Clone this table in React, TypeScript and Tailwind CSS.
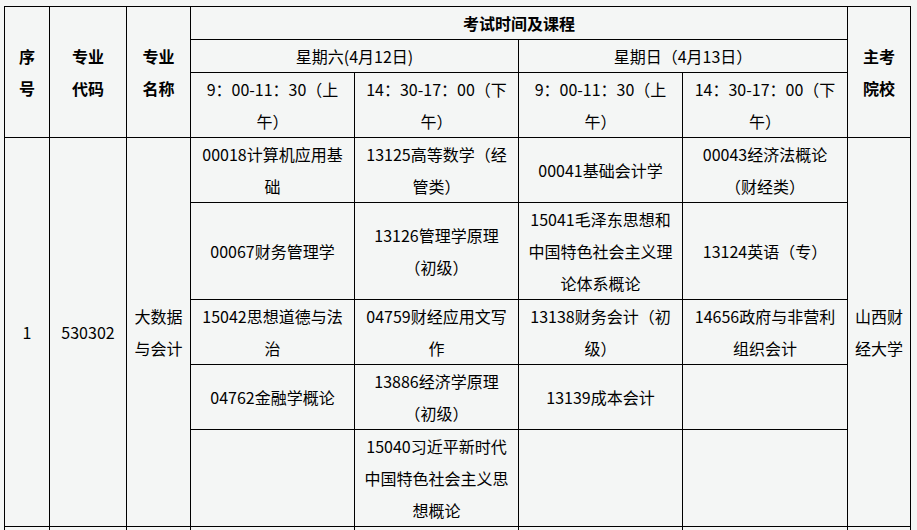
import React from 'react';

type Cell = string[];

const rows: { sat1: Cell; sat2: Cell; sun1: Cell; sun2: Cell }[] = [
  {
    sat1: ['00018计算机应用基', '础'],
    sat2: ['13125高等数学（经', '管类）'],
    sun1: ['00041基础会计学'],
    sun2: ['00043经济法概论', '（财经类）'],
  },
  {
    sat1: ['00067财务管理学'],
    sat2: ['13126管理学原理', '（初级）'],
    sun1: ['15041毛泽东思想和', '中国特色社会主义理', '论体系概论'],
    sun2: ['13124英语（专）'],
  },
  {
    sat1: ['15042思想道德与法', '治'],
    sat2: ['04759财经应用文写', '作'],
    sun1: ['13138财务会计（初', '级）'],
    sun2: ['14656政府与非营利', '组织会计'],
  },
  {
    sat1: ['04762金融学概论'],
    sat2: ['13886经济学原理', '（初级）'],
    sun1: ['13139成本会计'],
    sun2: [],
  },
  {
    sat1: [],
    sat2: ['15040习近平新时代', '中国特色社会主义思', '想概论'],
    sun1: [],
    sun2: [],
  },
];

const td = 'border border-black p-0 text-center align-middle whitespace-nowrap';

function Lines({ lines }: { lines: Cell }) {
  return (
    <>
      {lines.map((l, i) => (
        <div key={i}>{l}</div>
      ))}
    </>
  );
}

export default function App() {
  return (
    <div
      className="min-h-screen bg-[#f4f6f5] pt-[6px] pl-[4px] text-[16px] leading-[32px] text-black"
      style={{ fontFamily: '"Noto Sans CJK SC", "Noto Sans", sans-serif' }}
    >
      <table className="table-fixed border-collapse w-[907px]">
        <colgroup>
          <col className="w-[45px]" />
          <col className="w-[77px]" />
          <col className="w-[64px]" />
          <col className="w-[164px]" />
          <col className="w-[164px]" />
          <col className="w-[164px]" />
          <col className="w-[165px]" />
          <col className="w-[63px]" />
        </colgroup>
        <tbody>
          <tr>
            <td rowSpan={3} className={`${td} font-bold`}>
              <Lines lines={['序', '号']} />
            </td>
            <td rowSpan={3} className={`${td} font-bold`}>
              <Lines lines={['专业', '代码']} />
            </td>
            <td rowSpan={3} className={`${td} font-bold`}>
              <Lines lines={['专业', '名称']} />
            </td>
            <td colSpan={4} className={`${td} font-bold`}>
              考试时间及课程
            </td>
            <td rowSpan={3} className={`${td} font-bold`}>
              <Lines lines={['主考', '院校']} />
            </td>
          </tr>
          <tr>
            <td colSpan={2} className={td}>
              星期六(4月12日)
            </td>
            <td colSpan={2} className={td}>
              星期日（4月13日）
            </td>
          </tr>
          <tr>
            <td className={td}>
              <Lines lines={['9：00-11：30（上', '午）']} />
            </td>
            <td className={td}>
              <Lines lines={['14：30-17：00（下', '午）']} />
            </td>
            <td className={td}>
              <Lines lines={['9：00-11：30（上', '午）']} />
            </td>
            <td className={td}>
              <Lines lines={['14：30-17：00（下', '午）']} />
            </td>
          </tr>
          {rows.map((r, i) => (
            <tr key={i}>
              {i === 0 && (
                <>
                  <td rowSpan={5} className={td}>1</td>
                  <td rowSpan={5} className={td}>530302</td>
                  <td rowSpan={5} className={td}>
                    <Lines lines={['大数据', '与会计']} />
                  </td>
                </>
              )}
              <td className={td}>
                <Lines lines={r.sat1} />
              </td>
              <td className={td}>
                <Lines lines={r.sat2} />
              </td>
              <td className={td}>
                <Lines lines={r.sun1} />
              </td>
              <td className={td}>
                <Lines lines={r.sun2} />
              </td>
              {i === 0 && (
                <td rowSpan={5} className={td}>
                  <Lines lines={['山西财', '经大学']} />
                </td>
              )}
            </tr>
          ))}
          <tr>
            {Array.from({ length: 8 }).map((_, i) => (
              <td key={i} className={td}>
                &nbsp;
              </td>
            ))}
          </tr>
        </tbody>
      </table>
    </div>
  );
}
